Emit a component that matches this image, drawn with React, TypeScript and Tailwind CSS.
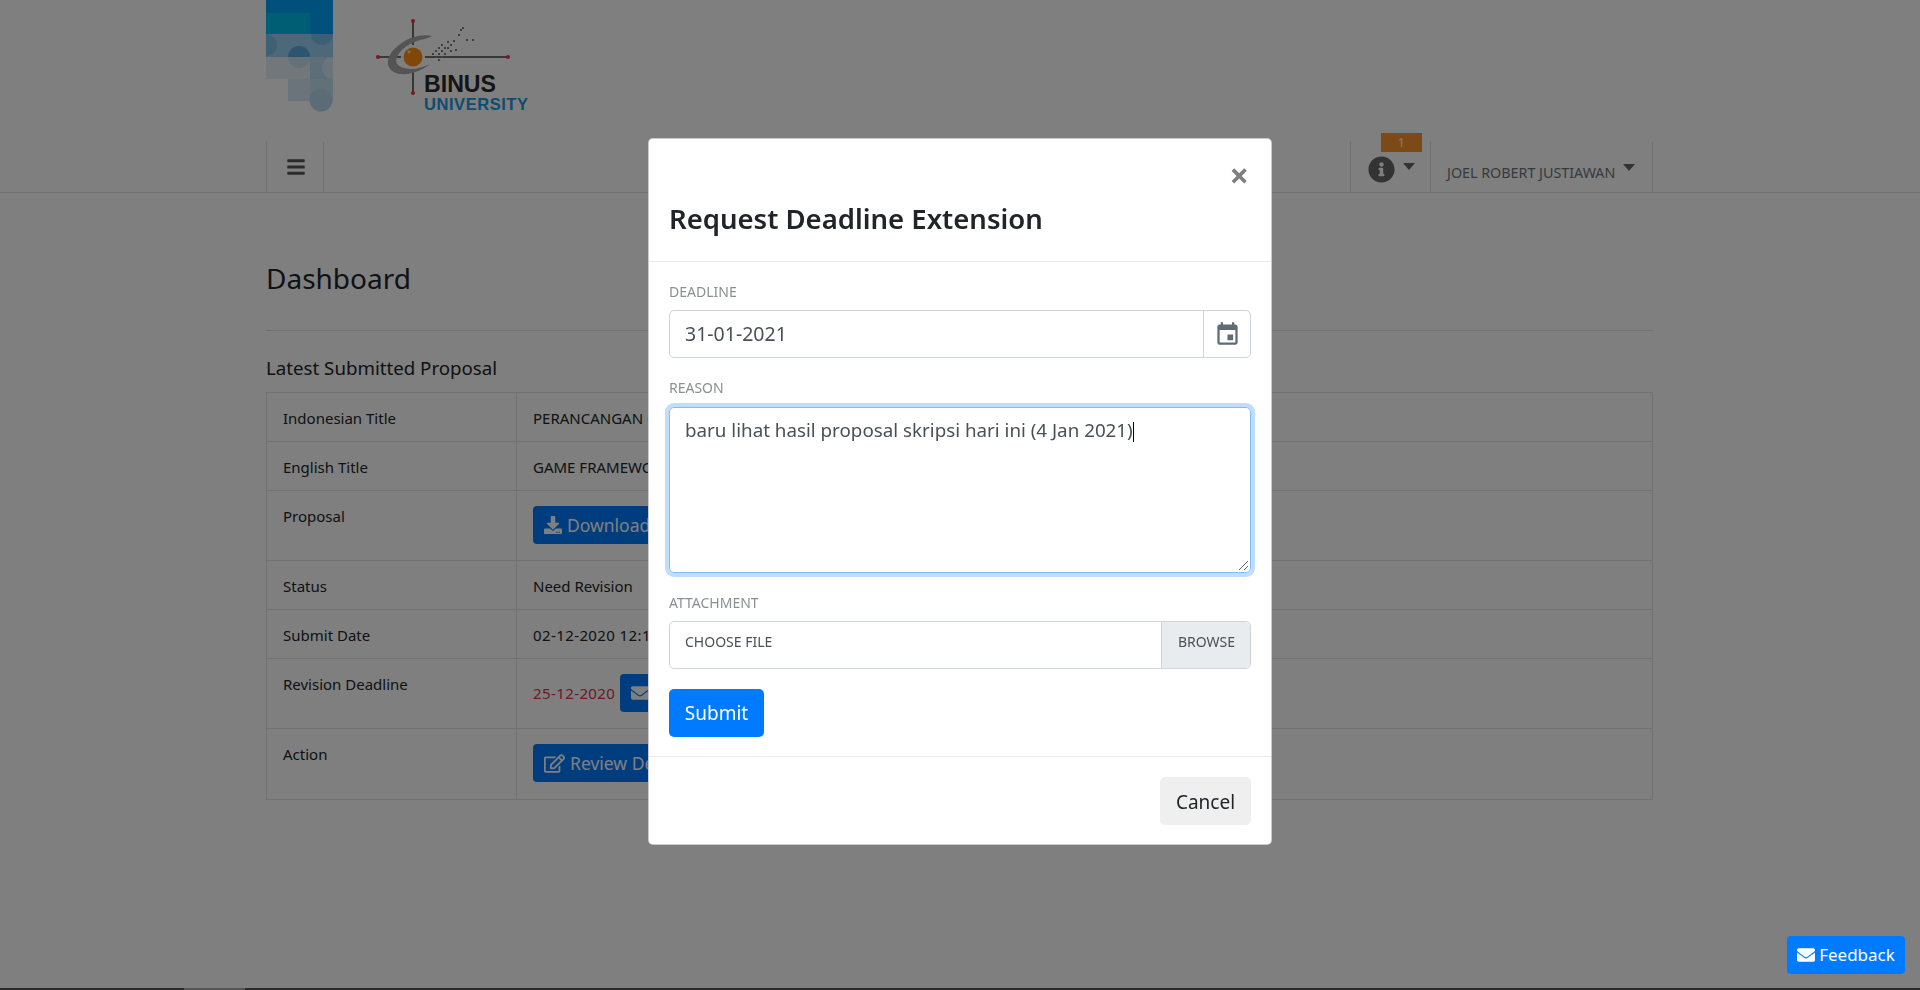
import { FaBars, FaDownload, FaEnvelope, FaInfoCircle, FaRegEdit } from "react-icons/fa";
import { MdEvent } from "react-icons/md";

const FONT = "font-['Noto_Sans','Open_Sans',sans-serif]";

// pixel cluster trailing off the eye in the BINUS mark
const PIXELS = [
  [62, 38], [65, 35], [65, 41], [68, 32], [68, 38], [68, 44], [71, 29], [71, 35], [71, 41], [74, 32], [74, 38],
  [77, 26], [77, 32], [80, 29], [80, 35], [83, 25], [85, 34], [88, 19], [90, 14], [92, 12], [96, 24], [102, 24],
];

function MosaicLogo() {
  return (
    <svg width="67" height="112" viewBox="0 0 67 112" className="block">
      <rect width="67" height="34" fill="#00a0f8" />
      <rect y="13" width="44" height="21" fill="#00bce8" />
      <rect y="34" width="67" height="23" fill="#9ad0f0" />
      <path d="M45 34a11 11 0 0 0 22 0z" fill="#7cbce8" />
      <path d="M0 34a11 11 0 0 1 0 22z" fill="#80c0ea" />
      <rect y="57" width="44" height="22" fill="#e4eff6" />
      <rect x="44" y="57" width="23" height="22" fill="#bcdcf0" />
      <rect x="22" y="79" width="22" height="22" fill="#d4e8f4" />
      <rect x="44" y="79" width="23" height="22" fill="#c4e0f0" />
      <path d="M22 57a11 11 0 0 1 22 0z" fill="#58ace0" />
      <path d="M22 57a11 11 0 0 0 22 0z" fill="#c8e2f2" />
      <path d="M67 57a11 11 0 0 0 0 22z" fill="#d4e8f4" />
      <circle cx="55" cy="100" r="11.500" fill="#b8d8ec" />
    </svg>
  );
}

function BinusLogo() {
  return (
    <svg width="170" height="100" viewBox="0 0 170 100" className="block">
      <path d="M43 6v72M8 42h130" stroke="#707070" strokeWidth="2" />
      <circle cx="43" cy="6" r="2" fill="#f03040" />
      <circle cx="43" cy="78" r="2" fill="#f03040" />
      <circle cx="8" cy="42" r="2" fill="#f03040" />
      <circle cx="138" cy="42" r="2" fill="#f03040" />
      <path d="M62 21C45 17 22 30 18 45C16 56 28 62 42 58C50 56 56 52 60 49C50 54 34 56 28 50C23 44 30 34 42 28C50 24 58 24 62 21Z" fill="#a8a8a8" />
      {PIXELS.map(([x, y]) => (
        <rect key={`${x}-${y}`} x={x} y={y} width="2" height="2" fill="#808080" />
      ))}
      <circle cx="43" cy="42" r="12" fill="#ffffff" />
      <circle cx="43" cy="42" r="9.500" fill="#ff9010" />
      <circle cx="39" cy="37" r="1.500" fill="#ffe0b0" />
      <text x="54" y="77" textLength="72" lengthAdjust="spacingAndGlyphs" fontFamily="'Liberation Sans',sans-serif" fontWeight="700" fontSize="24" fill="#2a2a2a">BINUS</text>
      <text x="54" y="95" textLength="104" fontFamily="'Liberation Sans',sans-serif" fontWeight="700" fontSize="16.500" fill="#1a9ae0">UNIVERSITY</text>
    </svg>
  );
}

function Row({ label, tall, children }: { label: string; tall?: boolean; children: React.ReactNode }) {
  return (
    <div className={`flex border-b border-[#dee2e6] last:border-b-0 ${tall ? "h-[70px]" : "h-[49px]"}`}>
      <div className="w-[250px] shrink-0 border-r border-[#dee2e6] px-4 pt-[14px]">{label}</div>
      <div className={`flex-1 px-4 ${tall ? "pt-[15px]" : "pt-[14px]"}`}>{children}</div>
    </div>
  );
}

function BlueButton({ children }: { children: React.ReactNode }) {
  return (
    <span className="inline-flex items-center gap-[5px] h-[38px] px-[11px] rounded bg-[#007bff] text-white text-[17.500px] whitespace-nowrap">{children}</span>
  );
}

export default function App() {
  return (
    <div className={`${FONT} min-h-[990px] bg-white text-[#212529] text-[15px]`}>
      <div className="w-[1387px] ml-[266px] h-[141px] flex">
        <MosaicLogo />
        <div className="ml-[37px] mt-[15px]"><BinusLogo /></div>
      </div>
      <div className="border-b border-[#dee2e6]">
        <div className="w-[1387px] ml-[266px] h-[51px] flex justify-between">
          <div className="w-[58px] border-x border-[#dee2e6] flex items-center justify-center pl-[1px] text-[#555] text-[20px]">
            <FaBars />
          </div>
          <div className="flex">
            <div className="relative w-[80px] border-l border-[#dee2e6] flex items-center pl-[17px] gap-[8px]">
              <span className="absolute left-[30px] top-[-8px] w-[41px] h-[19px] bg-[#f9952f] text-white text-[12px] text-center leading-[19px]">1</span>
              <FaInfoCircle className="text-[27px] text-[#666] mt-[5px]" />
              <span className="border-x-[6px] border-t-[7px] border-x-transparent border-t-[#666] mb-[1px]" />
            </div>
            <div className="w-[223px] border-x border-[#dee2e6] flex items-center pl-[16px] gap-[8px] text-[#6c757d] text-[14.300px]">
              <span className="mt-[12px] whitespace-nowrap">JOEL ROBERT JUSTIAWAN</span>
              <span className="border-x-[6px] border-t-[7px] border-x-transparent border-t-[#666] mt-[2px]" />
            </div>
          </div>
        </div>
      </div>
      <div className="w-[1387px] ml-[266px]">
        <h1 className="text-[28px] font-normal mt-[66px] leading-[38px]">Dashboard</h1>
        <hr className="mt-[33px] border-[#dee2e6]" />
        <h2 className="text-[18.700px] leading-[24px] mt-[25px]">Latest Submitted Proposal</h2>
        <div className="mt-[12px] border border-[#dee2e6]">
          <Row label="Indonesian Title">PERANCANGAN GAME</Row>
          <Row label="English Title">GAME FRAMEWORK DESIGN</Row>
          <Row label="Proposal" tall>
            <BlueButton><FaDownload size={18} />Download Proposal</BlueButton>
          </Row>
          <Row label="Status">Need Revision</Row>
          <Row label="Submit Date"><span className="tracking-[0.4px]">02-12-2020 12:10</span></Row>
          <Row label="Revision Deadline" tall>
            <span className="flex items-center gap-[5px]">
              <span className="text-[#dc3545] tracking-[0.4px]">25-12-2020</span>
              <BlueButton><FaEnvelope size={18} />Request Extension</BlueButton>
            </span>
          </Row>
          <Row label="Action" tall>
            <BlueButton><FaRegEdit size={21} />Review Details</BlueButton>
          </Row>
        </div>
      </div>

      <div className="fixed inset-0 bg-black/50 flex justify-center pt-[138px]">
        <div className="w-[624px] h-[707px] bg-white rounded-[5px] border border-black/20 flex flex-col">
          <div className="h-[123px] relative border-b border-[#e9ecef] px-5">
            <span className="absolute right-[22px] top-[17px] text-[34px] leading-[38px] font-bold text-[#7f7f7f]">×</span>
            <h3 className="pt-[60px] text-[27.500px] leading-[40px] font-semibold text-[#212529]">Request Deadline Extension</h3>
          </div>
          <div className="h-[495px] px-5 border-b border-[#e9ecef]">
            <label className="block mt-[20px] text-[14px] leading-[19px] text-[#8a8f94]">DEADLINE</label>
            <div className="mt-[9px] flex h-[48px] border border-[#ced4da] rounded-[5px] text-[#495057] text-[19.500px]">
              <div className="flex-1 flex items-center pl-[15px]">31-01-2021</div>
              <div className="w-[47px] border-l border-[#ced4da] flex items-center justify-center text-[27px] text-[#5f6b75]"><MdEvent /></div>
            </div>
            <label className="block mt-[20px] text-[14px] leading-[19px] text-[#8a8f94]">REASON</label>
            <div className="mt-[10px] h-[166px] border border-[#80bdff] rounded-[5px] shadow-[0_0_0_4px_rgba(0,123,255,0.25)] pl-[15px] pt-[9px] text-[#495057] text-[18.800px] leading-[26px] relative">
              <span>baru lihat hasil proposal skripsi hari ini (4 Jan 2021)</span>
              <span className="inline-block w-px h-[20px] bg-black align-middle" />
              <svg className="absolute right-[1px] bottom-[1px]" width="12" height="12" viewBox="0 0 12 12">
                <path d="M2 11 11 2M7 11l4-4" stroke="#666" strokeWidth="1" />
              </svg>
            </div>
            <label className="block mt-[20px] text-[14px] leading-[19px] text-[#8a8f94]">ATTACHMENT</label>
            <div className="mt-[9px] flex h-[48px] border border-[#ced4da] rounded-[5px] text-[14px] text-[#495057] overflow-hidden">
              <div className="flex-1 pl-[15px] pt-[9px]">CHOOSE FILE</div>
              <div className="w-[89px] bg-[#e9ecef] border-l border-[#ced4da] pl-4 pt-[9px]">BROWSE</div>
            </div>
            <button className="mt-[20px] h-[48px] w-[95px] rounded-[5px] bg-[#007bff] text-white text-[19px]">Submit</button>
          </div>
          <div className="flex-1 flex justify-end items-start pt-[20px] px-5">
            <button className="h-[48px] w-[91px] pt-[2px] rounded-[5px] bg-[#efefef] text-[#212529] text-[19px]">Cancel</button>
          </div>
        </div>
      </div>

      <button className="fixed right-[15px] bottom-[16px] h-[38px] w-[118px] rounded bg-[#007bff] text-white text-[17px] flex items-center justify-center gap-[4px]">
        <FaEnvelope size={18} />Feedback
      </button>
      <div className="fixed left-0 right-0 bottom-0 h-[2px] bg-[#2a2a2a] flex">
        <div className="ml-[184px] w-[61px] bg-[#555]" />
      </div>
    </div>
  );
}
